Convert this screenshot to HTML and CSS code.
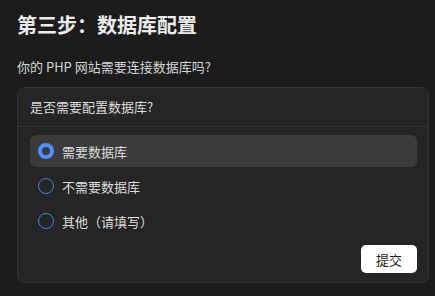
FILE: index.html
```html
<!DOCTYPE html>
<html>

<head>
    <title>数据库配置</title>
    <meta charset="utf-8">
    <meta name="viewport" content="width=device-width">
    <link rel="stylesheet" href="styles.css">
</head>

<body>
    <div id="container">
        <h1 class="step-title">第三步：数据库配置</h1>
        <p class="step-desc">你的 PHP 网站需要连接数据库吗?</p>

        <div class="card">
            <div class="card-header"><p>是否需要配置数据库?</p></div>
            <div class="card-body">
                <div class="option option-selected"><span class="radio"></span><span>需要数据库</span></div>
                <div class="option"><span class="radio"></span><span>不需要数据库</span></div>
                <div class="option"><span class="radio"></span><span>其他（请填写）</span></div>
                <div class="actions">
                    <button class="submit">提交</button>
                </div>
            </div>
        </div>
    </div>
</body>

</html>
```

FILE: styles.css
```css
html, body {
    margin: 0px;
    background-color: rgb(28, 28, 28);
    font-family: "Noto Sans CJK SC", "Noto Sans", sans-serif;
    color: rgb(228, 228, 228);
}
#container {
    padding: 11px 6px 0px 17px;
}
.step-title {
    margin: 0px;
    font-size: 20px;
    line-height: 28px;
    font-weight: bold;
    color: rgb(235, 235, 235);
}
.step-desc {
    margin: 18px 0px 10px 0px;
    font-size: 13px;
    line-height: 20px;
    color: rgb(214, 214, 214);
}
.card {
    background-color: rgb(37, 37, 37);
    border: 1px solid rgb(52, 52, 52);
    border-radius: 8px;
}
.card-header {
    padding: 9px 12px;
    border-bottom: 1px solid rgb(52, 52, 52);
}
.card-header p {
    margin: 0px;
    font-size: 13px;
    line-height: 20px;
    color: rgb(220, 220, 220);
}
.card-body {
    padding: 8px 11px 9px 12px;
    display: flex;
    flex-direction: column;
    gap: 3px;
}
.option {
    display: flex;
    align-items: center;
    gap: 8px;
    height: 32px;
    padding-left: 8px;
    border-radius: 6px;
    font-size: 13px;
    color: rgb(222, 222, 222);
}
.option-selected {
    background-color: rgb(59, 59, 59);
}
.radio {
    box-sizing: border-box;
    width: 16px;
    height: 16px;
    border-radius: 50%;
    border: 1.5px solid rgb(66, 128, 230);
}
.option-selected .radio {
    border: 4px solid rgb(77, 144, 254);
}
.actions {
    display: flex;
    justify-content: flex-end;
    margin-top: 5px;
}
.submit {
    width: 56px;
    height: 28px;
    border: none;
    border-radius: 5px;
    background-color: rgb(255, 255, 255);
    color: rgb(30, 30, 30);
    font-family: "Noto Sans CJK SC", sans-serif;
    font-size: 13px;
    padding: 0px;
}
```
